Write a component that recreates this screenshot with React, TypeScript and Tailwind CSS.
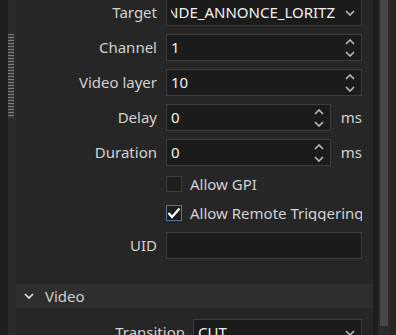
import React from "react";

const font = { fontFamily: '"Noto Sans", "Open Sans", sans-serif' };

const ChevronDown = ({ className = "" }: { className?: string }) => (
  <svg width="10" height="6" viewBox="0 0 10 6" className={className}>
    <path d="M1 1 L5 5 L9 1" fill="none" stroke="currentColor" strokeWidth="1.6" />
  </svg>
);

const ChevronUp = ({ className = "" }: { className?: string }) => (
  <svg width="10" height="6" viewBox="0 0 10 6" className={className}>
    <path d="M1 5 L5 1 L9 5" fill="none" stroke="currentColor" strokeWidth="1.6" />
  </svg>
);

const Label = ({ children }: { children: React.ReactNode }) => (
  <div className="text-right text-[15px] leading-none text-[#d2d2d2]">{children}</div>
);

const Spin = ({ value }: { value: string }) => (
  <div className="flex h-[27px] items-center justify-between border border-[#3d3d3d] bg-[#1b1b1b] pl-[4px] pr-[6px]">
    <span className="text-[15px] leading-none text-[#f2f2f2]">{value}</span>
    <div className="flex flex-col gap-[6px] text-[#bdbdbd]">
      <ChevronUp />
      <ChevronDown />
    </div>
  </div>
);

const Combo = ({ value, end }: { value: string; end?: boolean }) => (
  <div className="flex h-[27px] items-center gap-[10px] border border-[#3d3d3d] bg-[#1b1b1b] pl-[4px] pr-[6px]">
    <div className={end ? "flex min-w-0 flex-1 justify-end overflow-hidden" : "flex min-w-0 flex-1 overflow-hidden"}>
      <span className="whitespace-nowrap text-[15px] leading-none text-[#f2f2f2]">{value}</span>
    </div>
    <ChevronDown className="shrink-0 text-[#bdbdbd]" />
  </div>
);

const Check = ({ checked, label }: { checked?: boolean; label: string }) => (
  <div className="flex items-center gap-[8px] overflow-hidden whitespace-nowrap">
    <div
      className={
        checked
          ? "flex h-[16px] w-[16px] shrink-0 items-center justify-center border border-[#5677a6] bg-[#1d1d1d]"
          : "h-[16px] w-[16px] shrink-0 border border-[#3d3d3d] bg-[#1d1d1d]"
      }
    >
      {checked && (
        <svg width="14" height="12" viewBox="0 0 14 12">
          <path d="M1.5 6 L5 10 L12.5 1.5" fill="none" stroke="#ffffff" strokeWidth="2.2" />
        </svg>
      )}
    </div>
    <span className="text-[15px] leading-none text-[#d2d2d2]">{label}</span>
  </div>
);

export default function App() {
  return (
    <div className="flex h-[335px] w-[396px] overflow-hidden bg-[#262626]" style={font}>
      {/* left dock edge */}
      <div className="w-[8px] shrink-0 bg-[#1e1e1e]" />
      <div className="flex w-[8px] shrink-0 flex-col bg-[#2b2b2b]">
        <div className="mt-[34px] h-[84px] w-[6px] bg-[repeating-linear-gradient(to_bottom,#7a7a7a_0px,#7a7a7a_1px,#3a3a3a_1px,#3a3a3a_3px)]" />
      </div>

      {/* properties */}
      <div className="flex w-[357px] shrink-0 flex-col">
        <div className="mt-[-1px] grid grid-cols-[141px_196px] gap-x-[9px] gap-y-[8px] items-center">
          <Label>Target</Label>
          <Combo value="BANDE_ANNONCE_LORITZ" end />

          <Label>Channel</Label>
          <Spin value="1" />

          <Label>Video layer</Label>
          <Spin value="10" />

          <Label>Delay</Label>
          <div className="flex items-center gap-[10px]">
            <div className="w-[165px]">
              <Spin value="0" />
            </div>
            <span className="text-[15px] leading-none text-[#d2d2d2]">ms</span>
          </div>

          <Label>Duration</Label>
          <div className="flex items-center gap-[10px]">
            <div className="w-[165px]">
              <Spin value="0" />
            </div>
            <span className="text-[15px] leading-none text-[#d2d2d2]">ms</span>
          </div>

          <div className="h-[20px]" />
          <Check label="Allow GPI" />

          <div className="h-[22px]" />
          <Check checked label="Allow Remote Triggering" />

          <Label>UID</Label>
          <div className="h-[27px] border border-[#3d3d3d] bg-[#1b1b1b]" />
        </div>

        <div className="mt-[25px] flex h-[24px] shrink-0 items-center gap-[11px] bg-[#2e2e2e] pl-[8px]">
          <ChevronDown className="text-[#e6e6e6]" />
          <span className="text-[15px] leading-none text-[#cfcfcf]">Video</span>
        </div>

        <div className="mt-[11px] grid shrink-0 grid-cols-[169px_169px] gap-x-[8px] items-center">
          <Label>Transition</Label>
          <Combo value="CUT" />
        </div>
      </div>

      {/* scrollbar */}
      <div className="w-[5px] shrink-0 bg-[#1d1d1d]" />
      <div className="flex w-[12px] shrink-0 flex-col bg-[#2a2a2a] px-[2px]">
        <div className="h-[326px] bg-[#474747]" />
      </div>
      <div className="w-[6px] shrink-0 bg-[#262626]" />
    </div>
  );
}
